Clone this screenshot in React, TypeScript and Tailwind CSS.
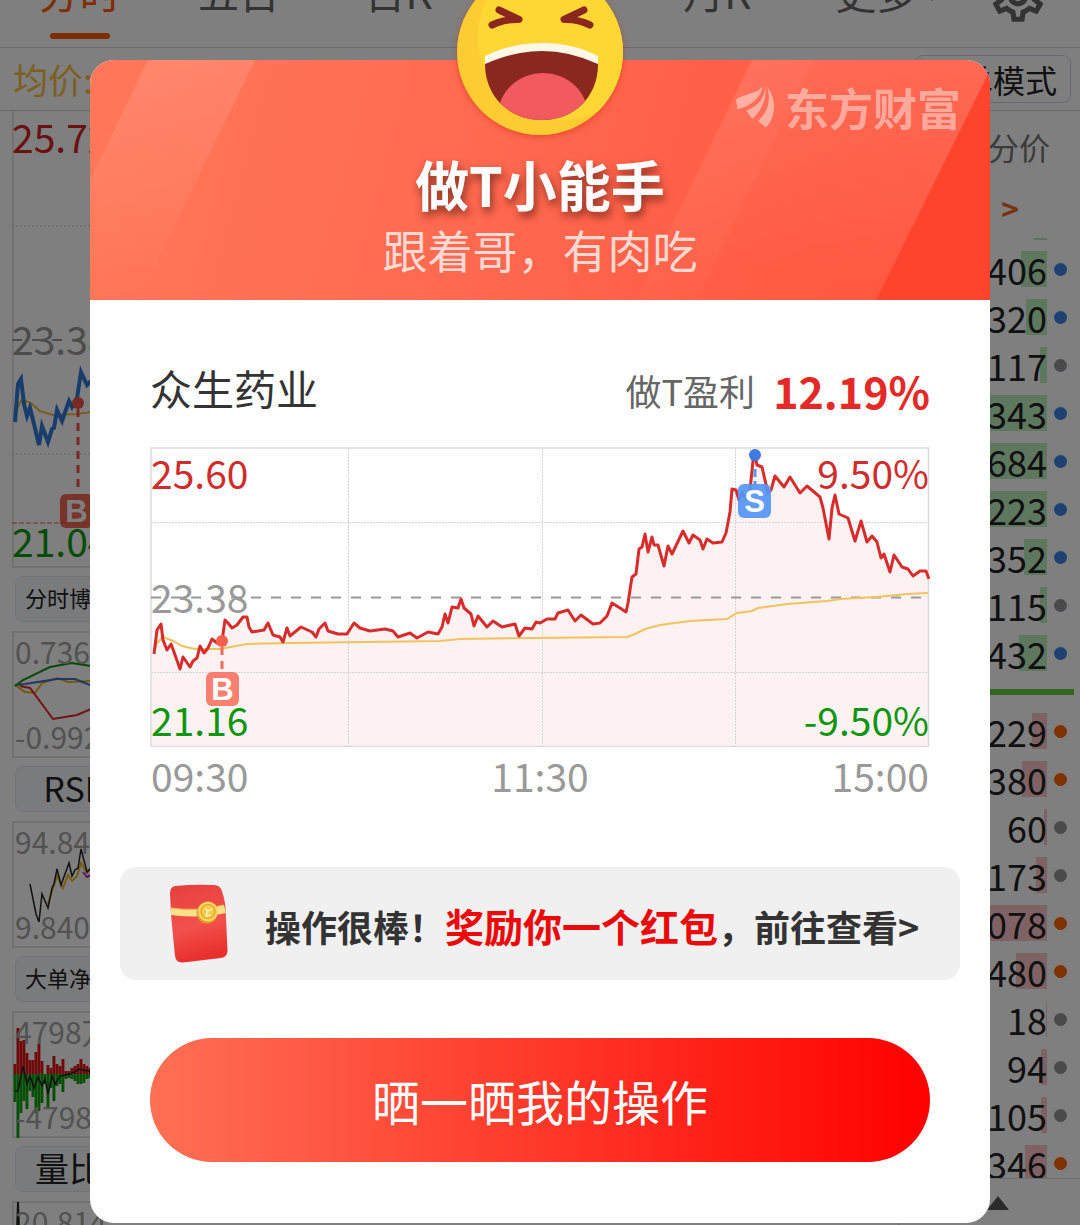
import React from "react";
import { MdOutlineSettings } from "react-icons/md";

const PRICE =
  "4,207 7,183 11,177 13,193 17,203 21,197 24,205 30,222 33,210 40,220 43,214 47,211 50,199 54,206 58,201 62,192 67,196 72,194 75,173 78,176 82,181 87,178 93,170 97,170 99,180 102,185 114,183 118,176 123,188 130,190 133,195 137,181 140,189 151,180 162,185 166,190 169,182 175,176 178,184 188,187 197,187 204,176 210,181 220,184 235,182 243,184 248,190 260,186 267,191 278,185 288,187 292,180 295,167 298,176 302,160 308,161 311,152 314,161 321,167 324,179 328,169 337,180 343,174 352,180 365,177 369,189 375,181 382,182 386,175 390,176 397,172 405,172 408,166 418,163 425,174 431,168 443,177 450,176 457,169 462,156 470,161 476,165 478,156 482,130 486,127 489,102 492,100 495,87 498,105 502,90 504,98 508,98 514,119 518,99 522,107 533,84 539,96 543,88 550,93 553,102 557,92 563,96 572,95 576,86 580,65 582,42 586,43 589,53 592,46 596,52 600,43 604,4 607,18 612,20 618,46 621,43 625,29 634,40 640,30 650,46 657,39 670,50 673,61 679,92 682,61 685,48 689,67 698,71 705,94 711,74 717,95 722,89 727,95 731,111 734,107 740,125 744,108 752,120 758,122 763,129 770,124 776,124 779,132";
const AVERAGE =
  "4,203 7,196 13,190 23,194 32,199 45,202 70,202 97,197 140,196 290,194 310,192 383,191 477,190 485,187 495,182 510,178 540,174 577,172 587,166 602,164 608,161 637,157 677,154 690,152 727,150 757,147 778,146";

const TABS = ["分时", "五日", "日K", "周K", "月K", "更多"];

type Deal = { value: string; bar: number; dot: "blue" | "gray" | "orange" };

const SELLS: Deal[] = [
  { value: "406", bar: 26, dot: "blue" },
  { value: "320", bar: 21, dot: "blue" },
  { value: "117", bar: 7, dot: "gray" },
  { value: "343", bar: 80, dot: "blue" },
  { value: "684", bar: 80, dot: "blue" },
  { value: "223", bar: 80, dot: "blue" },
  { value: "352", bar: 23, dot: "blue" },
  { value: "115", bar: 7, dot: "gray" },
  { value: "432", bar: 28, dot: "blue" },
];
const BUYS: Deal[] = [
  { value: "229", bar: 15, dot: "orange" },
  { value: "380", bar: 25, dot: "orange" },
  { value: "60", bar: 3, dot: "gray" },
  { value: "173", bar: 11, dot: "gray" },
  { value: "078", bar: 80, dot: "orange" },
  { value: "480", bar: 31, dot: "orange" },
  { value: "18", bar: 1, dot: "gray" },
  { value: "94", bar: 6, dot: "gray" },
  { value: "105", bar: 6, dot: "gray" },
  { value: "346", bar: 22, dot: "orange" },
];
const DOTS = { blue: "bg-[#3784e6]", gray: "bg-[#949498]", orange: "bg-[#ff6205]" };

const UP = [53, 17, 30, 29, 42, 49, 49, 41, 33, 50, 63, 54, 57, 45, 53, 55, 48, 60, 60, 57, 55, 53, 48, 53, 55, 57];
const DOWN = [91, 127, 102, 90, 98, 80, 86, 102, 100, 92, 73, 96, 77, 90, 75, 73, 81, 68, 67, 68, 70, 73, 73, 72, 68, 67];

function Marker({ x, y, letter, fill }: { x: number; y: number; letter: string; fill: string }) {
  return (
    <g>
      <rect x={x} y={y} width="33" height="34" rx="6" fill={fill} fillOpacity="0.92" />
      <text x={x + 16.5} y={y + 28} textAnchor="middle" fontSize="31" fontWeight="700" fill="#fff" fontFamily="Liberation Sans, sans-serif">
        {letter}
      </text>
    </g>
  );
}

function Deals({ rows, tone }: { rows: Deal[]; tone: string }) {
  return (
    <ul>
      {rows.map((r, i) => (
        <li key={i} className="flex h-12 items-center justify-end gap-[7px] pr-[13px]">
          <span className="relative flex h-9 w-20 items-center justify-end text-[36px] leading-9 text-[#222]">
            <span className={"absolute inset-y-0 right-0 " + tone} style={{ width: r.bar }} />
            <span className="relative">{r.value}</span>
          </span>
          <span className={"size-[13px] rounded-full " + DOTS[r.dot]} />
        </li>
      ))}
    </ul>
  );
}

function Indicator({
  name,
  small,
  top,
  bottom,
  children,
}: {
  name: string;
  small?: boolean;
  top: string;
  bottom?: string;
  children: React.ReactNode;
}) {
  return (
    <section className="pt-2">
      <button
        type="button"
        className={
          "ml-[3px] flex h-[46px] w-[108px] items-center justify-center whitespace-nowrap rounded-lg border border-[#e4e7f0] bg-[#f5f7fb] pb-1 text-[#222] " +
          (small ? "text-[22px]" : "text-[34px]")
        }
      >
        {name}
      </button>
      <div className="relative mt-[9px] h-[127px] border-2 border-[#e2e2e2]">
        <svg className="absolute -left-0.5 -top-0.5 h-[127px] w-[90px]" viewBox="0 0 90 127" fill="none" strokeWidth="2">
          {children}
        </svg>
        <div className="relative flex h-full flex-col justify-between px-px pb-0.5 text-[30px] leading-9 text-[#a4a4a4]">
          <span>{top}</span>
          <span>{bottom}</span>
        </div>
      </div>
    </section>
  );
}

function StockPage() {
  return (
    <div className="flex h-full flex-col overflow-hidden bg-white" aria-hidden="true">
      <nav className="flex h-12 shrink-0 items-end border-b border-[#d8dae2]">
        {TABS.map((t, i) => (
          <button
            key={t}
            type="button"
            className={
              "flex flex-1 flex-col items-center gap-5 pb-2 text-[41px] leading-[44px] " +
              (i === 0 ? "text-[#ff5a0a]" : "text-[#666]")
            }
          >
            <span className="relative">
              {t}
              {t === "更多" && (
                <span className="absolute -right-5 bottom-3 h-0 w-0 border-x-[5px] border-t-[6px] border-x-transparent border-t-[#666]" />
              )}
            </span>
            <span className={"h-1.5 w-[60px] rounded-full " + (i === 0 ? "bg-[#ff5a0a]" : "bg-transparent")} />
          </button>
        ))}
        <button type="button" aria-label="设置" className="flex w-[124px] justify-center pb-5 text-[#666]">
          <MdOutlineSettings className="size-[62px]" />
        </button>
      </nav>
      <div className="flex h-[63px] shrink-0 items-center justify-between border-b border-[#d4d6de] pl-[13px] pr-[9px]">
        <span className="text-[35px] text-[#f8c044]">均价:23.42</span>
        <button type="button" className="h-12 w-[156px] rounded-lg border border-[#d0d4de] text-[32px] leading-10 text-[#222]">
          简单模式
        </button>
      </div>
      <div className="flex min-h-0 flex-1">
        <div className="min-w-0 flex-1 pl-3">
          <div className="relative h-[457px] border-b-2 border-l-2 border-[#e2e2e2]">
            <svg className="absolute -left-0.5 top-0 h-[457px] w-[90px]" viewBox="0 0 90 457" fill="none">
              <path d="M0 115H90M0 343H90" stroke="#ccc" strokeDasharray="2 2" />
              <path d="M0 229H90" stroke="#999" strokeWidth="2" strokeDasharray="10 10" />
              <polyline points="4,300 10,288 20,293 28,300 41,304 65,303 79,301 90,300" stroke="#f0b848" strokeWidth="2" />
              <polyline
                points="3,311 6,273 9,268 12,293 15,305 18,297 22,313 27,334 30,315 36,331 40,318 42,317 45,299 50,310 57,290 60,296 65,287 69,261 75,274 79,270"
                stroke="#3078d8"
                strokeWidth="4"
              />
              <path d="M66 298V382" stroke="#f05545" strokeWidth="3" strokeDasharray="8 6" />
              <circle cx="66" cy="292" r="6" fill="#f05545" />
              <Marker x={48} y={383} letter="B" fill="#f05a48" />
              <path d="M0 412H90" stroke="#e86040" strokeDasharray="5 2" />
            </svg>
            <div className="relative -ml-0.5 flex h-full flex-col justify-between pb-1.5 pt-[5px] text-[39px] leading-10">
              <span className="text-[#d02525]">25.72</span>
              <span className="text-[#999]">23.38</span>
              <span className="text-[#0a9a0a]">21.04</span>
            </div>
          </div>
          <Indicator name="分时博弈" small top="0.736" bottom="-0.992">
            <polyline points="3,54 13,61 23,62 30,52 45,47 56,51 78,50" stroke="#e8b020" />
            <polyline points="3,54 13,53 45,48 63,48 78,54" stroke="#3f70c8" />
            <polyline points="3,55 11,49 38,36 60,32 79,35" stroke="#0a9a0a" />
            <polyline points="8,55 18,57 41,88 65,84 79,78" stroke="#e02828" />
          </Indicator>
          <Indicator name="RSI" top="94.84" bottom="9.840">
            <polyline points="71,51 75,56 79,54" stroke="#d020c0" />
            <polyline points="36,83 41,67 45,55 51,67 56,54 60,60 65,55 69,42 75,52 79,47" stroke="#e8b820" />
            <polyline points="18,63 24,93 27,101 30,73 36,87 40,67 42,63 45,48 49,64 57,42 60,55 63,49 66,47 69,28 75,51 79,47" stroke="#222" strokeWidth="1.5" />
          </Indicator>
          <Indicator name="大单净量" small top="4798万" bottom="-4798万">
            {UP.map((y, i) => (
              <g key={i}>
                <rect x={1.5 + i * 3} y={y} width="2.9" height={63 - y} fill="#e01515" />
                <rect x={1.5 + i * 3} y="63" width="2.9" height={DOWN[i] - 63} fill="#0aa00a" />
              </g>
            ))}
            <polyline points="3,80 6,80 11,55 15,73 18,65 22,77 26,66 30,75 33,68 36,83 40,65 43,73 48,65 58,63 68,58 79,61" stroke="#222" strokeWidth="1.5" />
          </Indicator>
          <Indicator name="量比" top="20.814">
            <polyline points="5,30 6,1 7,30" stroke="#222" />
          </Indicator>
        </div>
        <aside className="flex w-[180px] flex-col">
          <div className="flex h-[73px] shrink-0 items-center justify-end pr-[30px] text-[31px] text-[#777]">分价</div>
          <a href="#detail" className="flex h-12 shrink-0 items-center justify-end pr-[61px] text-[30px] font-bold text-[#ee6420]">
            &gt;
          </a>
          <div className="flex h-[13px] shrink-0 items-center justify-end pr-[33px]">
            <span className="h-0.5 w-[13px] bg-[#bfe4c0]" />
          </div>
          <Deals rows={SELLS} tone="bg-[#bdf0bf]" />
          <div className="my-3 mr-1.5 h-1.5 shrink-0 bg-[#5ecc42]" />
          <div className="min-h-0 flex-1 overflow-hidden">
            <Deals rows={BUYS} tone="bg-[#ffc6c8]" />
          </div>
          <div className="flex h-[47px] shrink-0 justify-end border-t border-[#dcdce4] pr-[71px] pt-[17px]">
            <span className="h-0 w-0 border-x-[11px] border-b-[14px] border-x-transparent border-b-[#555]" />
          </div>
        </aside>
      </div>
    </div>
  );
}

function LaughingFace() {
  return (
    <svg className="size-[166px] overflow-visible drop-shadow-[0_2px_3px_rgba(200,40,10,0.45)]" viewBox="0 0 166 166" role="img" aria-label="大笑">
      <defs>
        <clipPath id="face">
          <circle cx="83" cy="83" r="83" />
        </clipPath>
        <clipPath id="mouth">
          <path d="M28 95Q57 82 85 82T141 95C141 128 117 151 85 151S28 128 28 95Z" />
        </clipPath>
      </defs>
      <circle cx="83" cy="83" r="83" fill="#fdcb32" />
      <circle cx="104" cy="68" r="83" fill="#ffd735" clipPath="url(#face)" />
      <g fill="#8a281f" stroke="#8a281f" strokeWidth="7" strokeLinecap="round" strokeLinejoin="round">
        <path d="M42 41L62 50.500Q47 50 35 56" fill="none" />
        <path d="M127 41L107 50.500Q121 50 133 56" fill="none" />
        <path d="M52 47L62 51L50 52Z M117 47L107 51L119 52Z" strokeWidth="4" />
      </g>
      <path d="M28 87Q54 74 85 74T141 87V96Q113 84 85 84T28 96Z" fill="#fff8e6" />
      <g clipPath="url(#mouth)">
        <rect x="20" y="80" width="130" height="75" fill="#8a281f" />
        <ellipse cx="86" cy="147" rx="45" ry="43" fill="#f15b5f" />
      </g>
    </svg>
  );
}

function Brand() {
  return (
    <div className="absolute right-[29px] top-6 flex items-center gap-[11px] text-white/45">
      <svg className="h-[42px] w-[38px]" viewBox="0 0 110 119" fill="currentColor" aria-hidden="true">
        <path d="M77 0C60 22 25 20 0 38L4 66C40 58 70 34 77 2Z" />
        <path d="M85 2C79 42 60 58 30 70L47 94C72 72 89 40 85 2Z" />
        <path d="M91 2C102 45 90 75 64 100L86 119C114 92 120 40 91 2Z" />
      </svg>
      <span className="text-[44px] font-bold leading-[46px]">东方财富</span>
    </div>
  );
}

function Envelope() {
  return (
    <svg className="h-[80px] w-[60px] shrink-0" viewBox="-1 -1 60 80" aria-hidden="true">
      <defs>
        <linearGradient id="env" x1="0" y1="0" x2="0.2" y2="1">
          <stop offset="0" stopColor="#e5403e" />
          <stop offset="0.6" stopColor="#f2504c" />
          <stop offset="1" stopColor="#e8302e" />
        </linearGradient>
      </defs>
      <path d="M5 1Q25 -1 44 0Q50 0 52 6Q56 18 56 32L57.500 66Q57 72 51 73L13 77.500Q6 78 5 71L1 30L0 8Q0 2 5 1Z" fill="url(#env)" />
      <path d="M1 23Q25 27 54 20L56 28Q30 34 1 30Z" fill="#fbe08c" />
      <path d="M1 23Q25 27 54 20" stroke="#f3b94e" strokeWidth="1" fill="none" />
      <circle cx="37" cy="28" r="10.500" fill="#e0a02c" />
      <circle cx="38" cy="26.500" r="10" fill="#fbd45c" />
      <circle cx="38" cy="26.500" r="7" fill="#f8c94c" stroke="#dda02c" strokeWidth="1.200" />
      <path d="M35 23L38 26L42 24M38 26L36 31L41 30" stroke="#fff0b0" strokeWidth="1.600" fill="none" />
    </svg>
  );
}

function ProfitChart() {
  return (
    <div className="relative mt-[31px]">
      <svg className="block w-full" viewBox="0 0 780 300" fill="none" role="img" aria-label="众生药业分时走势">
        <polygon points={"1,300 1,207 " + PRICE + " 778,300"} fill="#fdf2f2" />
        <path d="M1 75.500H778M1 225.500H778M198.500 1V299M392.500 1V299M585.500 1V299" stroke="#d4d4d4" strokeDasharray="2 1" />
        <path d="M1 1H778.500V299.500H1Z" stroke="#dcdcdc" strokeWidth="1.500" />
        <path d="M1 150.500H778" stroke="#999" strokeWidth="2" strokeDasharray="10 10" />
        <polyline points={AVERAGE} stroke="#f3c25e" strokeWidth="2" />
        <polyline points={PRICE} stroke="#d82c2c" strokeWidth="3" strokeLinejoin="round" />
        <path d="M72 200V224" stroke="#f06a5c" strokeWidth="3" strokeDasharray="8 6" />
        <circle cx="72" cy="194" r="6" fill="#f3604f" />
        <Marker x={56} y={225} letter="B" fill="#f87566" />
        <path d="M605 22V38" stroke="#5b95ee" strokeWidth="3" strokeDasharray="8 4" />
        <circle cx="605" cy="8" r="6" fill="#3f7be0" />
        <Marker x={588} y={37} letter="S" fill="#5596f5" />
      </svg>
      <div className="absolute inset-0 flex justify-between px-px pb-2 pt-[5px] text-[39px] leading-10">
        <div className="flex flex-col justify-between">
          <span className="text-[#d12c2c]">25.60</span>
          <span className="text-[#999]">23.38</span>
          <span className="text-[#0f960f]">21.16</span>
        </div>
        <div className="flex flex-col items-end justify-between">
          <span className="text-[#d12c2c]">9.50%</span>
          <span className="text-[#0f960f]">-9.50%</span>
        </div>
      </div>
    </div>
  );
}

function ShareDialog() {
  return (
    <div role="dialog" aria-modal="true" aria-labelledby="dialog-title" className="relative w-full rounded-[24px] bg-white">
      <div className="absolute inset-x-0 -top-[91px] z-10 flex justify-center">
        <LaughingFace />
      </div>
      <header className="relative overflow-hidden rounded-t-[24px] bg-[linear-gradient(105deg,#ff7859_0%,#ff694f_45%,#ff5a42_80%,#ff563e_100%)] pb-[22px] pt-[92px] text-center">
        <svg className="absolute inset-0 h-full w-full" viewBox="0 0 900 240" preserveAspectRatio="none" aria-hidden="true">
          <defs>
            <linearGradient id="band-left" x1="0" y1="0" x2="0" y2="1">
              <stop offset="0" stopColor="#fff" stopOpacity="0.12" />
              <stop offset="1" stopColor="#fff" stopOpacity="0" />
            </linearGradient>
            <linearGradient id="band-right" x1="0" y1="0" x2="0" y2="1">
              <stop offset="0" stopColor="#fff" stopOpacity="0.12" />
              <stop offset="1" stopColor="#fff" stopOpacity="0.01" />
            </linearGradient>
            <linearGradient id="glow" x1="1" y1="0" x2="0.8" y2="1">
              <stop offset="0" stopColor="#fff" stopOpacity="0.1" />
              <stop offset="1" stopColor="#fff" stopOpacity="0" />
            </linearGradient>
          </defs>
          <path d="M723 0H900V240H607Z" fill="url(#glow)" />
          <path d="M58 0H165L49 240H0V120Z" fill="url(#band-left)" />
          <path d="M662 0H723L607 240H546Z" fill="url(#band-right)" />
          <path d="M900 10V240H786Z" fill="#ff442e" />
        </svg>
        <Brand />
        <h1 id="dialog-title" className="relative text-[54px] font-bold leading-[64px] text-white [text-shadow:2px_5px_8px_rgba(70,20,10,0.65)]">
          做T小能手
        </h1>
        <p className="relative mt-1.5 text-[45px] leading-[56px] text-white/75">跟着哥，有肉吃</p>
      </header>
      <div className="px-[60px] pb-[61px] pt-[60px]">
        <div className="flex items-center justify-between">
          <h2 className="text-[42px] leading-[56px] text-[#333]">众生药业</h2>
          <p className="flex items-center gap-[18px] pt-1 text-[36px] leading-[52px] text-[#666]">
            做T盈利
            <strong className="text-[43px] text-[#e32a28]">12.19%</strong>
          </p>
        </div>
        <ProfitChart />
        <div className="mt-1 flex justify-between px-px text-[39px] leading-[48px] text-[#999]">
          <span>09:30</span>
          <span>11:30</span>
          <span>15:00</span>
        </div>
        <a href="#reward" className="-mx-[30px] mt-[68px] flex h-[113px] items-center rounded-[16px] bg-[#f0f0f0] pl-[49px]">
          <Envelope />
          <span className="ml-9 whitespace-nowrap pt-1 text-[36px] font-bold text-[#333]">
            操作很棒！<span className="text-[39px] text-[#ea0a0a]">奖励你一个红包</span>，前往查看&gt;
          </span>
        </a>
        <button
          type="button"
          className="mt-[58px] block h-[124px] w-full rounded-full bg-linear-to-r/srgb from-[#ff7054] to-[#ff0000] text-[48px] text-white"
        >
          晒一晒我的操作
        </button>
      </div>
    </div>
  );
}

export default function App() {
  return (
    <main className="relative h-screen overflow-hidden font-['Noto_Sans_CJK_SC',sans-serif]">
      <StockPage />
      <div className="absolute inset-0 bg-black/50 px-[90px] pt-[60px]">
        <ShareDialog />
      </div>
    </main>
  );
}
